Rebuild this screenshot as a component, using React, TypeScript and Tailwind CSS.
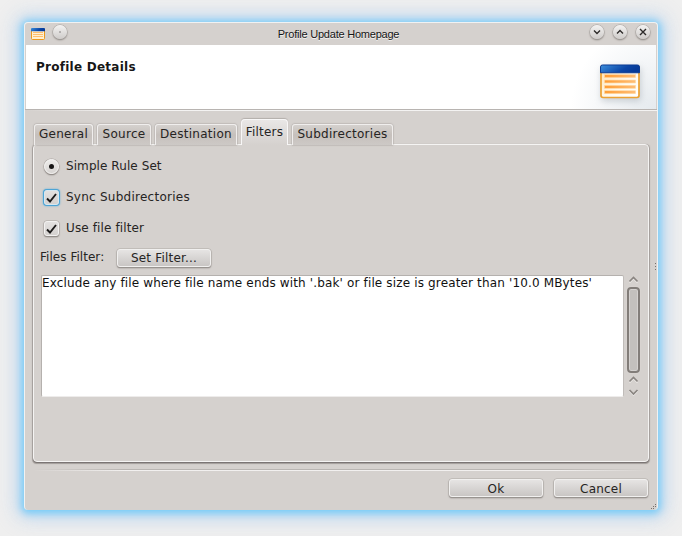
import React from "react";

const ui = "font-['DejaVu_Sans',sans-serif] text-[12px] leading-[16px] whitespace-nowrap text-[#262423]";

function AppIcon({ className, id, small }: { className: string; id: string; small?: boolean }) {
  return (
    <svg viewBox={small ? "0 0 14 12" : "0 0 40 36"} className={className} preserveAspectRatio="none">
      <defs>
        <linearGradient id={id + "b"} x1="0" x2="1" y1="0" y2="0.3">
          <stop offset="0" stopColor="#3c8fdc" />
          <stop offset="0.7" stopColor="#0a45a6" />
          <stop offset="1" stopColor="#063a98" />
        </linearGradient>
        <linearGradient id={id + "o"} x1="0" x2="1">
          <stop offset="0" stopColor="#ff9d33" />
          <stop offset="1" stopColor="#ffbd75" />
        </linearGradient>
        <linearGradient id={id + "f"} x1="0" x2="1" y1="0" y2="1">
          <stop offset="0" stopColor="#ffe2ac" />
          <stop offset="0.6" stopColor="#fffaf0" />
          <stop offset="1" stopColor="#ffffff" />
        </linearGradient>
      </defs>
      {small ? (
        <g>
          <rect x=".5" y="1.500" width="13" height="10" rx="1" fill="#fff0d2" stroke="#ec9a1f" />
          <path d="M0 3.200V1q0-1 1-1h12q1 0 1 1v2.200z" fill={`url(#${id}b)`} />
          <path d="M2 4.500h10M2 6.500h10M2 8.500h10" stroke="#ffbf6e" />
        </g>
      ) : (
        <g>
          <rect x="1" y="2" width="38" height="32.500" rx="2" fill={`url(#${id}f)`} stroke="#eba132" strokeWidth="1.7" />
          <path d="M.5 9V3q0-2 2-2h35q2 0 2 2v6z" fill={`url(#${id}b)`} stroke="#0c3c93" strokeWidth="1" />
          <g fill={`url(#${id}o)`} stroke="#ffd9a3" strokeWidth=".6">
            <rect x="4.500" y="11" width="31" height="3" />
            <rect x="4.500" y="16.500" width="31" height="3" />
            <rect x="4.500" y="22" width="31" height="3" />
            <rect x="4.500" y="27.500" width="31" height="3" />
          </g>
        </g>
      )}
    </svg>
  );
}

function RoundButton({ children }: { children: React.ReactNode }) {
  return (
    <span className="flex size-[14px] items-center justify-center rounded-full bg-linear-to-b from-[#f4f3f2] to-[#cfccca] shadow-[0_0_0_0.5px_#a5a19e,0_1px_2px_#807a76]">
      <svg viewBox="0 0 14 14" className="size-[14px] shrink-0 fill-none stroke-[#2d2b2a] stroke-[1.4]">
        {children}
      </svg>
    </span>
  );
}

function Tab({ label, width }: { label: string; width: string }) {
  return (
    <div
      className={`${ui} ${width} h-[21px] rounded-t-[3px] border-x border-t border-[#f0eeed] bg-linear-to-b from-[#d5d1ce] via-[#c6c0bc] via-50% to-[#cdc9c6] pt-px text-center tracking-[0.27px] shadow-[0_0_1.5px_#77716d]`}
    >
      {label}
    </div>
  );
}

function Button({ label, width }: { label: string; width: string }) {
  return (
    <button
      className={`${ui} ${width} flex h-[18px] items-center justify-center rounded-[3px] border border-[#f1f0ef] bg-linear-to-b from-[#e6e4e3] to-[#c9c6c4] pt-px tracking-[0.2px] shadow-[0_0_0_0.5px_#b0aba8,0_1px_1.5px_#6d6864]`}
    >
      {label}
    </button>
  );
}

function Check({ label, focused }: { label: string; focused?: boolean }) {
  return (
    <label className={`${ui} flex h-[31px] items-center`}>
      <span
        className={`-mt-[2px] mr-[7px] flex size-[15px] items-center justify-center rounded-[3px] border bg-linear-to-b from-[#e3e1e0] to-[#d4d1cf] ${
          focused
            ? "border-[#d7e8f1] shadow-[0_0_0_1px_#4da4d5,0_0_2px_1px_#5badd9]"
            : "border-[#f3f2f1] shadow-[0_0_0_0.5px_#aaa5a1,0_1px_1.5px_#69635f]"
        }`}
      >
        <svg viewBox="0 0 13 13" className="size-[13px] shrink-0 fill-none stroke-[#1b1a1a] stroke-[1.900]">
          <path d="M2 7.500l3 3L11 3" />
        </svg>
      </span>
      <span className={`-mt-[3px] ${focused ? "tracking-[0.25px]" : "tracking-[0.13px]"}`}>{label}</span>
    </label>
  );
}

function Arrow({ down }: { down?: boolean }) {
  return (
    <svg viewBox="0 0 11 8" className="h-[8px] w-[11px] fill-none">
      <path d={down ? "M1.500 3l4 4 4-4" : "M1.500 7.500l4-4 4 4"} className="stroke-[#efedec] stroke-[1.5]" />
      <path d={down ? "M1.500 2l4 4 4-4" : "M1.500 6.500l4-4 4 4"} className="stroke-[#8a8581] stroke-[1.7]" />
    </svg>
  );
}

export default function App() {
  return (
    <div className="h-[536px] w-[682px] overflow-hidden bg-[#efefef] pt-[22px] pl-[24px]">
      <div className="relative flex h-[488px] w-[634px] flex-col rounded-[4px] border-x border-t border-[#f0f2f3] bg-[#d5d1ce] shadow-[0_1px_7px_2px_#78cdf8,0_1px_14px_5px_#a8d0f0c0,0_1px_22px_8px_#cddcf0a0]">
        <div className="flex h-[22px] shrink-0 items-center px-[6px]">
          <AppIcon id="s" small className="mt-[-1px] h-[12px] w-[14px]" />
          <div className="mt-[-4px] ml-[8px]">
            <RoundButton>
              <path d="M6.500 7h1" className="stroke-[1]" />
            </RoundButton>
          </div>
          <div className="flex-1 text-center font-['Liberation_Sans',Arial,sans-serif] text-[11px] leading-[18px] tracking-[-0.22px] whitespace-nowrap text-[#151515] [text-shadow:0_1px_0_#f2f0ef]">
            <span className="-mt-[4px] ml-[20px] inline-block">Profile Update Homepage</span>
          </div>
          <div className="mt-[-4px] mr-px flex gap-[9px]">
            <RoundButton>
              <path d="M4 5.500l3 3 3-3" />
            </RoundButton>
            <RoundButton>
              <path d="M4 8.500l3-3 3 3" />
            </RoundButton>
            <RoundButton>
              <path d="M4 4l6 6m0-6l-6 6" />
            </RoundButton>
          </div>
        </div>

        <header className="mx-px flex h-[64px] shrink-0 justify-between bg-[radial-gradient(circle_at_100%_100%,#e5eaee_0,#ffffff_85px)] pr-[16px] pl-[10px]">
          <h1 className="mt-[13px] font-['DejaVu_Sans',sans-serif] text-[12px] leading-[18px] font-bold tracking-[0.25px] text-[#171717]">
            Profile Details
          </h1>
          <AppIcon id="l" className="mt-[19px] h-[35px] w-[40px] drop-shadow-[1px_3px_3px_#8b96a060]" />
        </header>
        <div className="h-px shrink-0 bg-[#b8b4b1]" />
        <div className="h-px shrink-0 bg-linear-to-r from-[#d5d1ce] via-[#f4f3f2] via-15% to-[#f4f3f2]" />

        <main className="flex flex-col pl-[8px]">
          <div className="relative z-10 mt-[8px] flex h-[26px] items-end pl-px">
            <Tab label="General" width="w-[59px]" />
            <div className="w-[4px]" />
            <Tab label="Source" width="w-[54px]" />
            <div className="w-[4px]" />
            <Tab label="Destination" width="w-[82px]" />
            <div className="w-[4px]" />
            <div
              className={`${ui} h-[26px] w-[47px] rounded-t-[4px] border-x border-t border-[#f8f7f7] bg-linear-to-b from-[#e9e7e6] to-[#d5d1ce] pt-[4px] text-center tracking-[0.2px] shadow-[0_-1px_1px_#b3aeab]`}
            >
              Filters
            </div>
            <div className="w-[4px]" />
            <Tab label="Subdirectories" width="w-[101px]" />
          </div>
          <section className="-mt-px h-[318px] w-[616px] rounded-[4px] border border-[#f5f4f3] bg-[#d5d1ce] pl-[6px] shadow-[0_1px_1px_#77716f,0_1px_1px_0.5px_#a7a29f]">
            <div className="pt-[7px] pl-[4px]">
              <label className={`${ui} flex h-[31px] items-center`}>
                <span className="-mt-[2px] mr-[7px] flex size-[15px] items-center justify-center rounded-full border border-[#f6f5f4] bg-linear-to-b from-[#edecea] to-[#d7d4d2] shadow-[0_0_0_0.5px_#aaa5a1,0_1px_1.5px_#69635f]">
                  <span className="size-[5px] rounded-full bg-[#171616]" />
                </span>
                <span className="-mt-[3px] tracking-[0.08px]">Simple Rule Set</span>
              </label>
              <Check label="Sync Subdirectories" focused />
              <Check label="Use file filter" />
            </div>
            <div className="flex h-[26px] items-center">
              <span className={`${ui} -mt-[2px] w-[77px] tracking-[0.04px]`}>Files Filter:</span>
              <div className="-mt-px">
                <Button label="Set Filter..." width="w-[94px]" />
              </div>
            </div>
            <div className="mt-[4px] flex pl-px">
              <div
                className={`${ui} h-[122px] w-[583px] rounded-[2px] border border-t-[#b5b1ae] border-r-[#c0bcb9] border-b-[#eeeceb] border-l-[#b5b1ae] bg-white tracking-[0.15px]`}
              >
                <div className="-mt-px text-[#111]">
                  Exclude any file where file name ends with '.bak' or file size is greater than '10.0 MBytes'
                </div>
              </div>
              <div className="ml-[2px] flex w-[14px] flex-col items-center">
                <Arrow />
                <div className="mt-[4px] h-[86px] w-[13px] shrink-0 rounded-[4px] border-2 border-[#827d79] bg-[#c3c0bd] shadow-[inset_0_0_0_1px_#d4d1cf,0_0_1px_#eeeceb]" />
                <div className="mt-[2px] flex flex-col gap-[5px]">
                  <Arrow />
                  <Arrow down />
                </div>
              </div>
            </div>
          </section>
        </main>
        <div className="mx-[8px] mt-[7px] h-[2px] shrink-0 bg-[linear-gradient(90deg,#d5d1ce,transparent_15%,transparent_85%,#d5d1ce),linear-gradient(#b9b5b2_50%,#f2f0ef_50%)]" />
        <footer className="mt-[8px] flex justify-end gap-[11px] pr-[9px]">
          <Button label="Ok" width="w-[94px]" />
          <Button label="Cancel" width="w-[94px]" />
        </footer>

        <svg viewBox="0 0 8 8" className="absolute right-0 bottom-0 size-[8px] fill-[#77716d]">
          <path d="M2 6h1v1H2zM4 6h1v1H4zM4 4h1v1H4zM6 2h1v1H6zM6 4h1v1H6z" />
        </svg>
        <svg viewBox="0 0 2 8" className="absolute top-[240px] right-0 h-[8px] w-[2px] fill-[#77716d]">
          <path d="M0 0h1v1H0zM0 3h1v1H0zM0 6h1v1H0z" />
        </svg>
      </div>
    </div>
  );
}
